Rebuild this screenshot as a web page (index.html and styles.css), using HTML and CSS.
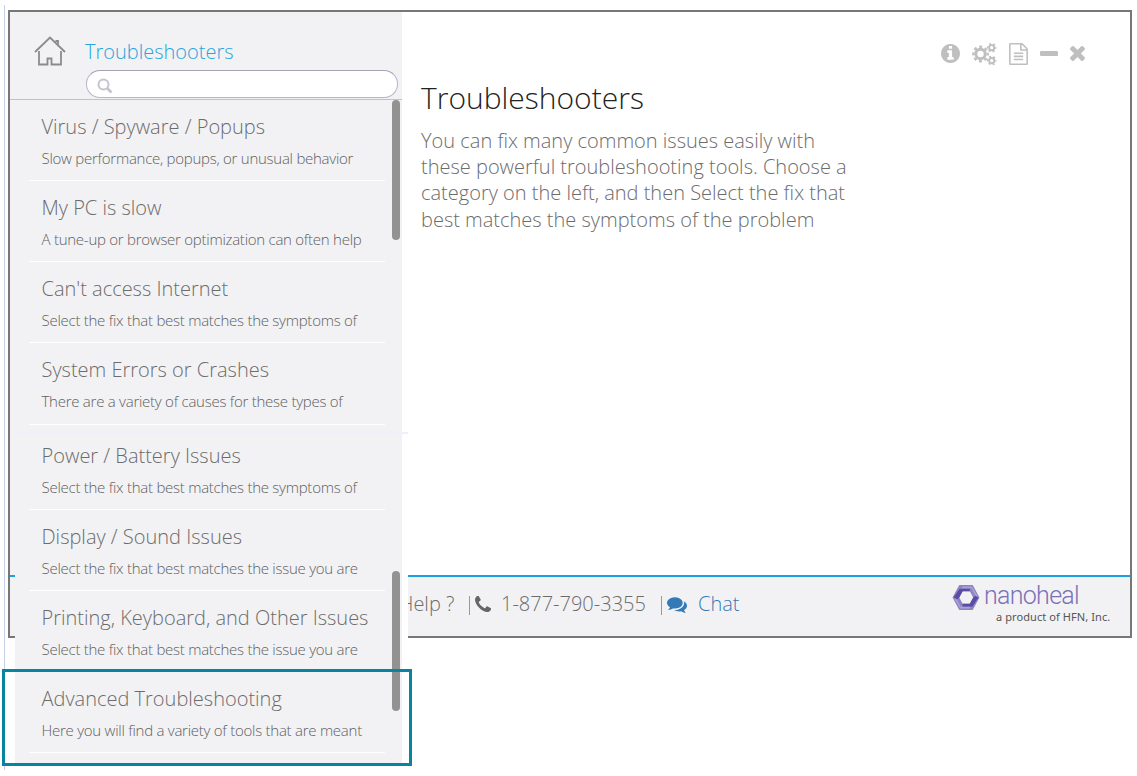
FILE: index.html
```html
<!DOCTYPE html>
<html lang="en">
<head>
<meta charset="utf-8">
<title>Troubleshooters</title>
<link rel="stylesheet" href="styles.css">
</head>
<body>
<div class="stage">
  <div class="page-rule"></div>
  <div class="window">
    <div class="content">
      <aside class="sidebar">
        <header class="side-head">
          <svg class="home" viewBox="0 0 32 31" fill="none" stroke="#8b8b8d" stroke-width="1.8"><path d="M1 16 16 1.500l15 14.500M5 15v13.500h8.500v-6h4v6H27V15M21.500 5h2.500v5"/></svg>
          <div class="head-col">
            <div class="side-title">Troubleshooters</div>
            <div class="search"><svg viewBox="0 0 16 16" fill="none" stroke="#c4c4d0"><circle cx="6.500" cy="6.500" r="5" stroke-width="2"/><path d="m10.500 10.500 4 4" stroke-width="2.600"/></svg></div>
          </div>
        </header>
        <ul class="list">
          <li><b>Virus / Spyware / Popups</b><span>Slow performance, popups, or unusual behavior</span></li>
          <li><b>My PC is slow</b><span>A tune-up or browser optimization can often help</span></li>
          <li><b>Can't access Internet</b><span>Select the fix that best matches the symptoms of</span></li>
          <li><b>System Errors or Crashes</b><span>There are a variety of causes for these types of</span></li>
        </ul>
        <div class="thumb"></div>
      </aside>
      <main class="main">
        <div class="tools">
          <svg class="i-info" viewBox="128 128 1536 1536"><path d="M1152 1376v-160q0-14-9-23t-23-9h-96v-512q0-14-9-23t-23-9h-320q-14 0-23 9t-9 23v160q0 14 9 23t23 9h96v320h-96q-14 0-23 9t-9 23v160q0 14 9 23t23 9h448q14 0 23-9t9-23zm-128-896v-160q0-14-9-23t-23-9h-192q-14 0-23 9t-9 23v160q0 14 9 23t23 9h192q14 0 23-9t9-23zm640 416q0 209-103 385.500t-279.500 279.500-385.500 103-385.500-103-279.500-279.500-103-385.500 103-385.500 279.500-279.500 385.500-103 385.500 103 279.500 279.500 103 385.500z"/></svg>
          <svg class="i-gears" viewBox="0 0 25 24" fill="none" stroke="#bfbfbf">
            <circle cx="8.500" cy="12" r="4.700" stroke-width="3"/><circle cx="8.500" cy="12" r="7.200" stroke-width="2.400" stroke-dasharray="2.900 2.755" stroke-dashoffset="1.450"/>
            <circle cx="19.700" cy="5.700" r="2.600" stroke-width="1.900"/><circle cx="19.700" cy="5.700" r="4" stroke-width="1.700" stroke-dasharray="2 2.189" stroke-dashoffset="1"/>
            <circle cx="19.700" cy="18.600" r="2.600" stroke-width="1.900"/><circle cx="19.700" cy="18.600" r="4" stroke-width="1.700" stroke-dasharray="2 2.189" stroke-dashoffset="1"/>
          </svg>
          <svg class="i-file" viewBox="128 0 1536 1792"><path d="M1596 380q28 28 48 76t20 88v1152q0 40-28 68t-68 28h-1344q-40 0-68-28t-28-68v-1600q0-40 28-68t68-28h896q40 0 88 20t76 48zm-444-244v376h376q-10-29-22-41l-313-313q-12-12-41-22zm384 1528v-1024h-416q-40 0-68-28t-28-68v-416h-768v1536h1280zm-1024-864q0-14 9-23t23-9h704q14 0 23 9t9 23v64q0 14-9 23t-23 9h-704q-14 0-23-9t-9-23v-64zm736 224q14 0 23 9t9 23v64q0 14-9 23t-23 9h-704q-14 0-23-9t-9-23v-64q0-14 9-23t23-9h704zm0 256q14 0 23 9t9 23v64q0 14-9 23t-23 9h-704q-14 0-23-9t-9-23v-64q0-14 9-23t23-9h704z"/></svg>
          <svg class="i-min" viewBox="192 640 1408 384" preserveAspectRatio="none"><path d="M1600 736v192q0 40-28 68t-68 28h-1216q-40 0-68-28t-28-68v-192q0-40 28-68t68-28h1216q40 0 68 28t28 68z"/></svg>
          <svg class="i-close" viewBox="302 366 1188 1188"><path d="M1490 1322q0 40-28 68l-136 136q-28 28-68 28t-68-28l-294-294-294 294q-28 28-68 28t-68-28l-136-136q-28-28-28-68t28-68l294-294-294-294q-28-28-28-68t28-68l136-136q28-28 68-28t68 28l294 294 294-294q28-28 68-28t68 28l136 136q28 28 28 68t-28 68l-294 294 294 294q28 28 28 68z"/></svg>
        </div>
        <h1>Troubleshooters</h1>
        <p class="intro">You can fix many common issues easily with<br>these powerful troubleshooting tools. Choose a<br>category on the left, and then Select the fix that<br>best matches the symptoms of the problem</p>
      </main>
    </div>
    <footer class="footer">
      <div class="help">Help ?</div>
      <i class="bar"></i>
      <svg class="i-phone" viewBox="192 128 1408 1408"><path d="M1600 1240q0 27-10 70.500t-21 68.500q-21 50-122 106-94 51-186 51-27 0-53-3.500t-57.500-12.500-47-14.500-55.500-20.500-49-18q-98-35-175-83-127-79-264-216t-216-264q-48-77-83-175-3-9-18-49t-20.500-55.500-14.500-47-12.500-57.500-3.500-53q0-92 51-186 56-101 106-122 25-11 68.500-21t70.500-10q14 0 21 3 18 6 53 76 11 19 30 54t35 63.500 31 53.500q3 4 17.500 25t21.500 35.500 7 28.500q0 20-28.500 50t-62 55-62 53-28.500 46q0 9 5 22.500t8.500 20.500 14 24 11.500 19q76 137 174 235t235 174q2 1 19 11.500t24 14 20.500 8.500 22.500 5q18 0 46-28.500t53-62 55-62 50-28.500q14 0 28.500 7t35.500 21.500 25 17.500q25 15 53.500 31t63.500 35 54 30q70 35 76 53 3 7 3 21z"/></svg>
      <div class="phone">1-877-790-3355</div>
      <i class="bar"></i>
      <svg class="i-chat" viewBox="0 256 1792 1408"><path d="M1408 768q0 139-94 257t-256.500 186.500-353.500 68.500q-86 0-176-16-124 88-278 128-36 9-86 16h-3q-11 0-20.500-8t-11.500-21q-1-3-1-6.500t.5-6.500 2-6l2.500-5 3.500-5.500 4-5 4.500-5 4-4.500q5-6 23-25t26-29.500 22.500-29 25-38.500 20.500-44q-124-72-195-177t-71-224q0-139 94-257t256.500-186.500 353.500-68.500 353.500 68.500 256.500 186.500 94 257zm384 256q0 120-71 224.500t-195 176.500q10 24 20.500 44t25 38.500 22.500 29 26 29.500 23 25q1 1 4 4.500t4.500 5 4 5 3.500 5.500l2.500 5 2 6 .5 6.500-1 6.500q-3 14-13 22t-22 7q-50-7-86-16-154-40-278-128-90 16-176 16-271 0-472-132 58 4 88 4 161 0 309-45t264-129q125-92 192-212t67-254q0-77-23-152 129 71 204 178t75 230z"/></svg>
      <a class="chat">Chat</a>
      <div class="brand">
        <div class="brand-row">
          <svg class="logo" viewBox="0 0 28 26"><path fill="#8d84c3" fill-rule="evenodd" d="M7 0h14l7 13-7 13H7L0 13zM10.500 6.500 7 13l3.500 6.500h7.500l3.500-6.500L18 6.500z"/><path fill="#5b4ba5" d="M7.500 4H18v2.500h-7.500L7 13l-2.500 2L1 13zM27 13l-6.500 9.500H10.500v-3H18l3.500-6.500 2.500-2z"/><path fill="#a9a2d4" d="M1 13l3.500 2 4 7.500H19l-1.500 2H8zM27 13l-3.500-2-4-7.500H9.500l1-2H20z"/></svg>
          <div class="wordmark">nanoheal</div>
        </div>
        <div class="tagline">a product of HFN, Inc.</div>
      </div>
    </footer>
  </div>

  <section class="continued">
    <ul class="list">
      <li><b>Power / Battery Issues</b><span>Select the fix that best matches the symptoms of</span></li>
      <li><b>Display / Sound Issues</b><span>Select the fix that best matches the issue you are</span></li>
      <li><b>Printing, Keyboard, and Other Issues</b><span>Select the fix that best matches the issue you are</span></li>
      <li><b>Advanced Troubleshooting</b><span>Here you will find a variety of tools that are meant</span></li>
    </ul>
    <div class="thumb"></div>
  </section>
  <div class="highlight"></div>
</div>
</body>
</html>
```

FILE: styles.css
```css
* { box-sizing: border-box; }
body { margin: 0; background: #fff; font-family: "Open Sans", sans-serif; font-weight: 300; color: #6c6c6c; }
svg { display: block; flex: none; fill: #bfbfbf; }
.stage { position: relative; width: 1137px; height: 776px; padding: 10px 0 0 8px; overflow: hidden; }
.page-rule { position: absolute; left: 4px; top: 5px; width: 1px; height: 765px; background: #c3cfe8; }
.window { width: 1124px; height: 628px; border: 2px solid #777; display: flex; flex-direction: column; }
.content { flex: 1; display: flex; }
.sidebar { position: relative; width: 392px; background: #f2f2f4; }
.side-head { height: 88px; border-bottom: 1px solid #c2c2c4; display: flex; padding: 24px 0 0 24px; }
.home { width: 32px; height: 31px; fill: none; }
.head-col { margin-left: 19px; }
.side-title { height: 34px; line-height: 31px; font-size: 20px; color: #27a5dd; white-space: nowrap; }
.search { width: 312px; height: 28px; margin-left: 1px; border: 1px solid #b5b5c6; border-top-color: #a5a5b8; border-radius: 14px; background: #fff; padding: 7px 0 0 10px; }
.search svg { width: 16px; height: 16px; fill: none; }
.i-gears, .i-gears circle { fill: none; }
.list { list-style: none; margin: 0; padding: 0 0 0 19px; }
.list li { width: 356px; height: 81.150px; border-bottom: 1px solid #fff; padding: 13px 0 0 12.500px; white-space: nowrap; }
.list b { display: block; font-weight: 300; font-size: 20px; line-height: 28px; }
.list span { display: block; margin-top: 7px; font-size: 15px; line-height: 20px; letter-spacing: -0.260px; color: #606060; }
.thumb { position: absolute; right: 2px; top: 88px; width: 8px; height: 140px; border-radius: 4px; background: #929292; }
.main { flex: 1; padding: 30px 44px 0 19px; }
.tools { display: flex; align-items: center; height: 23px; justify-content: flex-end; }
.i-info { width: 19px; height: 19px; }
.i-gears { width: 25px; height: 24px; margin-left: 12px; }
.i-file { width: 19px; height: 22px; margin-left: 12px; }
.i-min { width: 18px; height: 5px; margin-left: 12px; }
.i-close { width: 15px; height: 15px; margin-left: 12px; margin-right: 1px; }
h1 { margin: 13px 0 0; font-size: 30px; line-height: 40px; font-weight: 300; color: #222; }
.intro { margin: 10px 0 0; font-size: 20px; line-height: 26.200px; white-space: nowrap; }
.footer { height: 61px; border-top: 2px solid #1ba1e2; background: #f2f2f4; display: flex; align-items: flex-start; padding: 13px 20px 0 389px; font-size: 20px; line-height: 28px; white-space: nowrap; }
.help { width: 70px; }
.bar { width: 1px; height: 19px; margin-top: 6px; background: #999; }
.i-phone { width: 16px; height: 16px; margin: 6px 0 0 5px; fill: #666; }
.phone { margin-left: 10px; width: 160px; }
.i-chat { width: 20px; height: 16px; margin: 7px 0 0 5px; fill: #337ab7; }
.chat { margin-left: 11px; color: #337ab7; }
.brand { margin: -5px 0 0 auto; width: 158px; }
.brand-row { display: flex; height: 25px; }
.logo { width: 28px; height: 25px; }
.wordmark { margin-left: 4px; font-family: Roboto, sans-serif; font-weight: 300; font-size: 25px; line-height: 22px; letter-spacing: -0.700px; color: #7a70b8; }
.tagline { margin-left: 44px; font-family: "Noto Sans", sans-serif; font-weight: 400; font-size: 11px; line-height: 14px; letter-spacing: 0.080px; color: #555; }
.continued { position: absolute; left: 15px; top: 432px; width: 393px; height: 331px; background: linear-gradient(#eef1fa, #eef1fa) 0 0 / 393px 2px no-repeat, linear-gradient(90deg, #f2f2f4 387px, #fff 387px); }
.continued .list { padding: 0 0 0 14px; }
.continued .list li:first-child { height: 78px; padding-top: 10px; }
.continued .thumb { top: 139px; right: 8px; }
.highlight { position: absolute; left: 2px; top: 669px; width: 410px; height: 97px; border: 3px solid #0785a0; }
```
